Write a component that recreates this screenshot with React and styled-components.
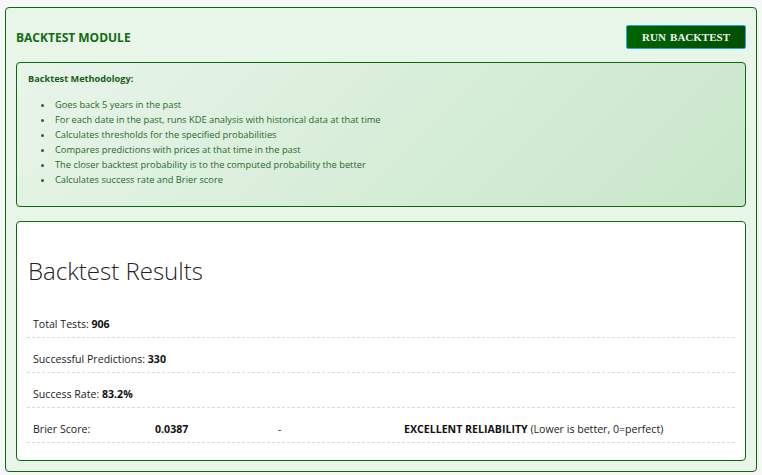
import React from "react";
import styled, { createGlobalStyle } from "styled-components";

const Global = createGlobalStyle`
  html, body { margin: 0; padding: 0; background: #f7f7f7; }
  body { font-family: "Open Sans", "Liberation Sans", sans-serif; }
  * { box-sizing: border-box; }
`;

const Page = styled.div`
  padding: 7px 5px 3px 5px;
`;

const Module = styled.section`
  background: #e8f5e9;
  border: 1px solid #0b6b0b;
  border-radius: 4px;
  padding: 14px 10px 10px 10px;
  display: flex;
  flex-direction: column;
  gap: 14px;
`;

const Header = styled.div`
  display: flex;
  align-items: center;
  justify-content: space-between;
  height: 26px;
  margin-top: 2px;
  margin-bottom: -2px;
`;

const Title = styled.h2`
  margin: 0;
  font-size: 12px;
  font-weight: 700;
  color: #136b13;
`;

const RunButton = styled.button`
  width: 120px;
  height: 24px;
  background: linear-gradient(90deg, #006400, #004f00);
  border: 1px solid #2aa6e8;
  border-radius: 2px;
  color: #f2f2f2;
  font-family: "Liberation Serif", "Courier New", serif;
  font-weight: 700;
  font-size: 11px;
  letter-spacing: 0;
  word-spacing: 1.5px;
  padding: 0;
  cursor: pointer;
`;

const Methodology = styled.div`
  background: linear-gradient(135deg, #e8f5e9 0%, #c8e6c9 100%);
  border: 1px solid #0b6b0b;
  border-radius: 4px;
  padding: 10px 11px 19px 11px;
  height: 145px;
`;

const MethTitle = styled.div`
  font-size: 9.2px;
  font-weight: 700;
  color: #1b5e20;
  line-height: 12px;
`;

const List = styled.ul`
  margin: 12px 0 0 0;
  padding-left: 26px;
  list-style: disc;
`;

const Item = styled.li`
  font-size: 9.3px;
  line-height: 15px;
  color: #256a28;
  padding-left: 1px;
`;

const Results = styled.div`
  background: #ffffff;
  border: 1px solid #0b6b0b;
  border-radius: 4px;
  padding: 32px 10px 17px 10px;
`;

const ResultsTitle = styled.h3`
  margin: 0 0 15px 1px;
  font-size: 24px;
  font-weight: 300;
  color: #222;
  line-height: 34px;
`;

const Row = styled.div`
  display: grid;
  grid-template-columns: ${(p) => (p.$cols ? "122px 123px 126px 1fr" : "1fr")};
  align-items: center;
  height: 35px;
  padding: 8px 6px 0 6px;
  border-bottom: 1px dashed #c8e6c9;
  font-size: 10.6px;
  color: #222;
`;

const Strong = styled.b`
  font-weight: 700;
  color: #111;
`;

const items = [
  "Goes back 5 years in the past",
  "For each date in the past, runs KDE analysis with historical data at that time",
  "Calculates thresholds for the specified probabilities",
  "Compares predictions with prices at that time in the past",
  "The closer backtest probability is to the computed probability the better",
  "Calculates success rate and Brier score",
];

export default function App() {
  return (
    <Page>
      <Global />
      <Module>
        <Header>
          <Title>BACKTEST MODULE</Title>
          <RunButton>RUN BACKTEST</RunButton>
        </Header>
        <Methodology>
          <MethTitle>Backtest Methodology:</MethTitle>
          <List>
            {items.map((t) => (
              <Item key={t}>{t}</Item>
            ))}
          </List>
        </Methodology>
        <Results>
          <ResultsTitle>Backtest Results</ResultsTitle>
          <Row>
            <span>
              Total Tests: <Strong>906</Strong>
            </span>
          </Row>
          <Row>
            <span>
              Successful Predictions: <Strong>330</Strong>
            </span>
          </Row>
          <Row>
            <span>
              Success Rate: <Strong>83.2%</Strong>
            </span>
          </Row>
          <Row $cols>
            <span>Brier Score:</span>
            <Strong>0.0387</Strong>
            <span>-</span>
            <span>
              <Strong>EXCELLENT RELIABILITY</Strong> (Lower is better, 0=perfect)
            </span>
          </Row>
        </Results>
      </Module>
    </Page>
  );
}
